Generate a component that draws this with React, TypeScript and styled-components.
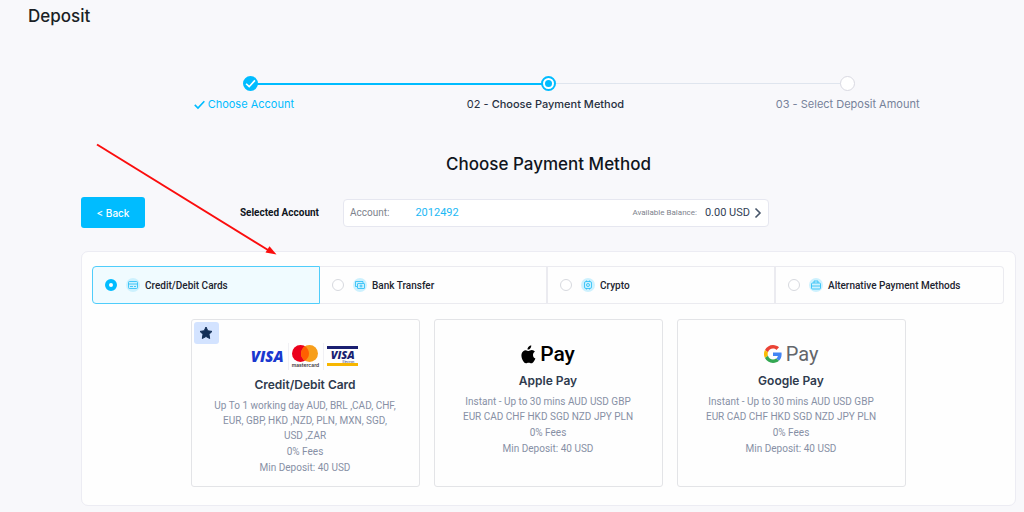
import React from 'react';
import styled, { createGlobalStyle } from 'styled-components';

const GlobalStyle = createGlobalStyle`
  * { box-sizing: border-box; }
  body {
    margin: 0;
    background: #f8f8fb;
    color: #1d2733;
    font-family: Roboto, "Liberation Sans", sans-serif;
    font-size: 10px;
  }
  h1, h2, h3, p, ol, ul, fieldset { margin: 0; padding: 0; border: 0; min-width: 0; }
  ol, ul { list-style: none; }
  button, input { font: inherit; }
`;

const accent = '#00bcff';

const Page = styled.main`
  position: relative;
  padding: 0 8px 6px 81px;
`;

const PageTitle = styled.h1`
  margin-left: -53px;
  padding-top: 4px;
  font: 500 17px/24px Inter, sans-serif;
  color: #1b1f26;
`;

const Stepper = styled.ol`
  display: grid;
  grid-template-columns: repeat(3, 1fr);
  margin: 48px 19px 0 20px;
`;

type StepState = 'done' | 'current' | 'next';
const stepColor = { done: accent, current: '#27303f', next: '#76829a' };
const labelInset = { done: 13, current: 7, next: 0 };

const Step = styled.li<{ $state: StepState }>`
  position: relative;
  display: flex;
  flex-direction: column;
  align-items: center;
  gap: 5px;
  color: ${(p) => stepColor[p.$state]};
  font: 400 11px/16px Inter, sans-serif;

  &:not(:last-child)::after {
    content: "";
    position: absolute;
    top: 7px;
    left: 50%;
    width: 100%;
    height: ${(p) => (p.$state === 'done' ? 2 : 1)}px;
    background: ${(p) => (p.$state === 'done' ? accent : '#dfe5ee')};
  }
`;

const StepDot = styled.span<{ $state: StepState }>`
  z-index: 1;
  display: grid;
  place-items: center;
  width: 15px;
  height: 15px;
  border-radius: 50%;
  border: ${(p) => (p.$state === 'next' ? '1px solid #d9d9e2' : `2px solid ${accent}`)};
  background: ${(p) => (p.$state === 'done' ? accent : '#fff')};

  &::after {
    content: "";
    display: ${(p) => (p.$state === 'current' ? 'block' : 'none')};
    width: 7px;
    height: 7px;
    border-radius: 50%;
    background: ${accent};
  }
`;

const StepLabel = styled.span<{ $state: StepState }>`
  display: flex;
  align-items: center;
  gap: 3px;
  padding-right: ${(p) => labelInset[p.$state]}px;
  white-space: nowrap;
`;

const StepName = styled.span`
  font-weight: 500;
`;

const SectionTitle = styled.h2`
  margin-top: 40px;
  text-align: center;
  font: 500 17px/24px Inter, sans-serif;
  color: #10151d;
`;

const AccountRow = styled.div`
  display: grid;
  grid-template-columns: 262fr 426fr 247fr;
  align-items: center;
  margin-top: 21px;
`;

const AccountLead = styled.div`
  display: flex;
  align-items: center;
  justify-content: space-between;
  padding-right: 24px;
`;

const BackButton = styled.button`
  width: 64px;
  height: 31px;
  padding: 0;
  border: 0;
  border-radius: 3px;
  background: ${accent};
  color: #fff;
  font: 500 10px/16px Inter, sans-serif;
`;

const AccountHeading = styled.span`
  font-weight: 700;
  color: #10151d;
`;

const AccountBox = styled.button`
  display: flex;
  align-items: center;
  height: 28px;
  padding: 0 6px;
  border: 1px solid #e6e7f0;
  border-radius: 4px;
  background: #fff;
  color: #7d828c;
  font-size: 10px;
`;

const AccountNumber = styled.span`
  margin-left: 26px;
  font-size: 11px;
  color: #1cb9f5;
`;

const BalanceLabel = styled.span`
  margin-left: auto;
  font-size: 8px;
`;

const Balance = styled.span`
  display: flex;
  align-items: center;
  gap: 4px;
  margin-left: 8px;
  font-size: 11px;
  color: #334155;
`;

const Panel = styled.section`
  margin-top: 23px;
  padding: 14px 11px 18px 10px;
  border: 1px solid #ececf3;
  border-radius: 7px;
  background: #fefefe;
`;

const Tabs = styled.fieldset`
  display: grid;
  grid-template-columns: repeat(4, 1fr);
`;

const Tab = styled.label`
  display: flex;
  align-items: center;
  height: 38px;
  padding-left: 12px;
  border: 1px solid #ebebf0;
  border-right-width: 2px;
  border-left-width: 0;
  color: #1d2430;
  font-size: 10px;
  font-weight: 500;

  &:first-child { border-left-width: 1px; border-radius: 4px 0 0 4px; }
  &:last-child { border-right-width: 1px; border-radius: 0 4px 4px 0; }
  &:has(input:checked) { border: 1px solid #4fcdfb; background: #f0fbff; }
`;

const Radio = styled.input`
  appearance: none;
  width: 12px;
  height: 12px;
  margin: 0;
  border: 1px solid #d7d9df;
  border-radius: 50%;
  background: #fff;

  &:checked { border: 4px solid ${accent}; }
`;

const TabIcon = styled.svg`
  width: 14px;
  height: 14px;
  margin: 0 5px 0 9px;
  border-radius: 50%;
  background: #cdf1fe;
  fill: none;
  stroke: #22bdf6;
`;

const Cards = styled.ul`
  display: grid;
  grid-template-columns: repeat(3, 1fr);
  gap: 14px;
  max-width: 715px;
  margin: 15px auto 0;
`;

const Card = styled.li`
  position: relative;
  display: flex;
  flex-direction: column;
  align-items: center;
  min-height: 168px;
  padding: 22px 22px 10px;
  border: 1px solid #e3e4e7;
  border-radius: 3px;
  text-align: center;
  color: #8790a5;
  line-height: 15px;
`;

const Badge = styled.span`
  position: absolute;
  top: 2px;
  left: 2px;
  display: grid;
  place-items: center;
  width: 25px;
  height: 22px;
  border-radius: 3px;
  background: #d3e3ff;
`;

const CardTitle = styled.h3`
  margin: 7px 0 5px;
  font: 600 12px/16px Inter, sans-serif;
  color: #2f3b4e;
`;

const CardLine = styled.p`
  margin-bottom: 1px;
`;

const Brand = styled.div<{ $color: string }>`
  display: flex;
  align-items: center;
  gap: 4px;
  height: 24px;
  font: 500 21px/24px Roboto, sans-serif;
  color: ${(p) => p.$color};
`;

const ThinWord = styled.span`
  font-size: 20px;
  font-weight: 400;
`;

const CardBrands = styled.div`
  display: flex;
  align-items: center;
  height: 28px;
`;

const BrandCell = styled.span`
  display: flex;
  flex-direction: column;
  align-items: center;
  justify-content: center;
  height: 27px;
  padding: 0 4px 0 3px;

  & + & { border-left: 1px solid #f0f0f4; }
`;

const VisaWord = styled.span<{ $small?: boolean }>`
  font: italic 800 ${(p) => (p.$small ? '11px/12px' : '15px/16px')} "Open Sans", sans-serif;
  color: ${(p) => (p.$small ? '#1a1f71' : '#1a38cf')};
`;

const BrandCaption = styled.span`
  font: 600 5px/6px Inter, sans-serif;
  color: #3a3638;
`;

const VisaElectron = styled.span`
  display: flex;
  flex-direction: column;
  align-items: center;
  width: 31px;
  border-top: 3px solid #1a1f71;
  border-bottom: 3px solid #f7b600;
  height: 20px;
`;

const ElectronCaption = styled.span`
  align-self: flex-end;
  padding-right: 4px;
  font: 400 3px/2px Inter, sans-serif;
  color: #1a1f71;
`;

const Pointer = styled.svg`
  position: absolute;
  top: 140px;
  left: 90px;
  pointer-events: none;
`;

const Check = () => (
  <svg width="11" height="11" viewBox="0 0 10 10" fill="none" stroke="currentColor" strokeWidth="1.500">
    <path d="M0.700 5.400 3.600 8.200 9.400 2" />
  </svg>
);

const AppleMark = () => (
  <svg width="15" height="19" viewBox="0 0 15 19" fill="#000">
    <path d="M10.300.400c.100 1.200-.400 2.200-1.100 3-.700.800-1.700 1.300-2.700 1.200-.100-1.100.400-2.200 1.100-2.900C8.300.900 9.400.400 10.300.400ZM13.900 6.700c-1.200.700-1.900 1.800-1.900 3.200 0 1.600.900 2.900 2.400 3.500-.400 1.100-.900 2.100-1.600 3-.700 1-1.400 1.900-2.500 1.900s-1.400-.600-2.700-.600-1.700.600-2.700.600c-1.100 0-1.900-1-2.600-2C.900 14.300-.100 11.200.700 8.500c.600-2 2.200-3.300 4-3.300 1.200 0 2.200.800 2.900.800.700 0 1.900-.900 3.300-.900 1.200.100 2.300.600 3 1.600Z" />
  </svg>
);

const GoogleMark = () => (
  <svg width="18" height="18" viewBox="0 0 48 48">
    <path fill="#EA4335" d="M24 9.500c3.540 0 6.710 1.220 9.210 3.600l6.850-6.850C35.900 2.380 30.470 0 24 0 14.620 0 6.510 5.380 2.560 13.220l7.980 6.190C12.430 13.720 17.740 9.500 24 9.500z" />
    <path fill="#4285F4" d="M46.980 24.550c0-1.570-.15-3.090-.38-4.550H24v9.020h12.940c-.58 2.960-2.260 5.480-4.780 7.180l7.730 6c4.510-4.180 7.090-10.360 7.090-17.650z" />
    <path fill="#FBBC05" d="M10.530 28.590a14.500 14.500 0 0 1 0-9.180l-7.980-6.190a24 24 0 0 0 0 21.560l7.980-6.190z" />
    <path fill="#34A853" d="M24 48c6.480 0 11.930-2.130 15.890-5.810l-7.730-6c-2.150 1.450-4.920 2.300-8.160 2.300-6.260 0-11.570-4.220-13.470-9.910l-7.980 6.190C6.510 42.620 14.620 48 24 48z" />
  </svg>
);

const tabs = [
  {
    name: 'Credit/Debit Cards',
    icon: <><rect x="2.500" y="3.500" width="9" height="7" rx="1" /><path d="M2.500 6h9M4 8.500h3M8 8.500h2" /></>,
  },
  {
    name: 'Bank Transfer',
    icon: <><path d="M4 8.500H2.500v-5H10V5" /><rect x="4.500" y="5.500" width="7" height="5" rx="0.500" /><circle cx="8" cy="8" r="1" /></>,
  },
  {
    name: 'Crypto',
    icon: <><rect x="3.500" y="3.500" width="7" height="7" rx="1.500" /><circle cx="7" cy="7" r="1.500" /><path d="M5.500 2.500v1M8.500 2.500v1M5.500 10.500v1M8.500 10.500v1" /></>,
  },
  {
    name: 'Alternative Payment Methods',
    icon: <><rect x="2.500" y="5" width="9" height="6" rx="1" /><path d="M5 5V3h4v2M2.500 8h9" /></>,
  },
];

const CardLogos = () => (
  <CardBrands>
    <BrandCell><VisaWord>VISA</VisaWord></BrandCell>
    <BrandCell>
      <svg width="26" height="17" viewBox="0 0 26 17">
        <circle cx="8.500" cy="8.500" r="8.500" fill="#eb001b" />
        <circle cx="17.500" cy="8.500" r="8.500" fill="#f79e1b" />
        <path d="M13 1.300a8.500 8.500 0 0 1 0 14.400 8.500 8.500 0 0 1 0-14.400Z" fill="#ff5f00" />
      </svg>
      <BrandCaption>mastercard</BrandCaption>
    </BrandCell>
    <BrandCell>
      <VisaElectron>
        <VisaWord $small>VISA</VisaWord>
        <ElectronCaption>Electron</ElectronCaption>
      </VisaElectron>
    </BrandCell>
  </CardBrands>
);

const walletTerms = 'Instant - Up to 30 mins AUD USD GBP EUR CAD CHF HKD SGD NZD JPY PLN';

const methods = [
  {
    name: 'Credit/Debit Card',
    logo: <CardLogos />,
    terms: 'Up To 1 working day AUD, BRL ,CAD, CHF, EUR, GBP, HKD ,NZD, PLN, MXN, SGD, USD ,ZAR',
    favourite: true,
  },
  { name: 'Apple Pay', logo: <Brand $color="#000"><AppleMark />Pay</Brand>, terms: walletTerms },
  { name: 'Google Pay', logo: <Brand $color="#63666b"><GoogleMark /><ThinWord>Pay</ThinWord></Brand>, terms: walletTerms },
];

export default function App() {
  return (
    <>
      <GlobalStyle />
      <Page>
        <PageTitle>Deposit</PageTitle>
        <Stepper>
          <Step $state="done">
            <StepDot $state="done">
              <svg width="11" height="11" viewBox="0 0 10 10" fill="none" stroke="#fff" strokeWidth="1.500">
                <path d="M1 5.200 3.800 7.900 9 2.200" />
              </svg>
            </StepDot>
            <StepLabel $state="done"><Check />Choose Account</StepLabel>
          </Step>
          <Step $state="current">
            <StepDot $state="current" />
            <StepLabel $state="current">02 - <StepName>Choose Payment Method</StepName></StepLabel>
          </Step>
          <Step $state="next">
            <StepDot $state="next" />
            <StepLabel $state="next">03 - Select Deposit Amount</StepLabel>
          </Step>
        </Stepper>

        <SectionTitle>Choose Payment Method</SectionTitle>

        <AccountRow>
          <AccountLead>
            <BackButton type="button">&lt; Back</BackButton>
            <AccountHeading>Selected Account</AccountHeading>
          </AccountLead>
          <AccountBox type="button">
            Account:
            <AccountNumber>2012492</AccountNumber>
            <BalanceLabel>Available Balance:</BalanceLabel>
            <Balance>
              0.00 USD
              <svg width="8" height="12" viewBox="0 0 8 12" fill="none" stroke="#475569" strokeWidth="1.600">
                <path d="M1.500 1.500 6 6 1.500 10.500" />
              </svg>
            </Balance>
          </AccountBox>
        </AccountRow>

        <Panel>
          <Tabs aria-label="Payment method type">
            {tabs.map((tab, i) => (
              <Tab key={tab.name}>
                <Radio type="radio" name="method-type" defaultChecked={i === 0} />
                <TabIcon viewBox="0 0 14 14" strokeWidth="0.800">{tab.icon}</TabIcon>
                {tab.name}
              </Tab>
            ))}
          </Tabs>
          <Cards>
            {methods.map((m) => (
              <Card key={m.name}>
                {m.favourite && (
                  <Badge>
                    <svg width="14" height="14" viewBox="0 0 14 14" fill="#132f57" stroke="#132f57" strokeLinejoin="round">
                      <path d="M7 1 8.800 4.800 13 5.400 10 8.300 10.700 12.500 7 10.500 3.300 12.500 4 8.300 1 5.400 5.200 4.800Z" />
                    </svg>
                  </Badge>
                )}
                {m.logo}
                <CardTitle>{m.name}</CardTitle>
                <CardLine>{m.terms}</CardLine>
                <CardLine>0% Fees</CardLine>
                <CardLine>Min Deposit: 40 USD</CardLine>
              </Card>
            ))}
          </Cards>
        </Panel>

        <Pointer width="190" height="118" viewBox="90 140 190 118">
          <path d="M97 144.500 268 250" stroke="#fb0d0d" strokeWidth="2" />
          <path d="M276.500 254.500 265.500 252.500 269.500 246.200Z" fill="#fb0d0d" />
        </Pointer>
      </Page>
    </>
  );
}
